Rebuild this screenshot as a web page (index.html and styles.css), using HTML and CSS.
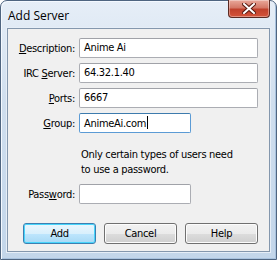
FILE: index.html
```html
<!DOCTYPE html>
<html lang="en">
<head>
  <meta charset="UTF-8" />
  <title>Add Server</title>
  <link rel="stylesheet" href="styles.css">
</head>
<body>

  <div class="window">
    <div class="titlebar">
      <span class="title">Add Server</span>
      <div class="close">
        <svg width="14" height="11" viewBox="0 0 14 11">
          <path d="M2 1 L12 10 M12 1 L2 10" stroke="#5a1a10" stroke-width="4" stroke-linecap="square"/>
          <path d="M2 1 L12 10 M12 1 L2 10" stroke="#ffffff" stroke-width="2" stroke-linecap="square"/>
        </svg>
      </div>
    </div>

    <div class="client">
      <div class="form">
        <label><u>D</u>escription:</label>
        <div class="field wide">Anime Ai</div>

        <label>IRC <u>S</u>erver:</label>
        <div class="field wide">64.32.1.40</div>

        <label><u>P</u>orts:</label>
        <div class="field wide">6667</div>

        <label><u>G</u>roup:</label>
        <div class="field short focus">AnimeAi.com<span class="caret"></span></div>
      </div>

      <p class="note">Only certain types of users need<br>to use a password.</p>

      <div class="form">
        <label>Pass<u>w</u>ord:</label>
        <div class="field short"></div>
      </div>

      <div class="buttons">
        <button class="default">Add</button>
        <button>Cancel</button>
        <button>Help</button>
      </div>
    </div>
  </div>

</body>
</html>
```

FILE: styles.css
```css
* {
  box-sizing: border-box;
  margin: 0;
  padding: 0;
}

body {
  background: #ffffff;
  font-family: Tahoma, "DejaVu Sans Condensed", "Liberation Sans", sans-serif;
  font-size: 11px;
  letter-spacing: -0.3px;
  color: #000;
}

.window {
  width: 277px;
  height: 260px;
  border: 1px solid #4f6580;
  border-radius: 7px 7px 0 0;
  background: linear-gradient(180deg, #e6eef7 0%, #cfdeee 40%, #c3d6ea 100%);
  box-shadow: inset 1px 1px 0 #f4f9ff, inset -1px -1px 0 #a9c3df;
  display: flex;
  flex-direction: column;
  padding: 0 6px 7px 6px;
}

.titlebar {
  height: 27px;
  display: flex;
  justify-content: space-between;
  align-items: flex-start;
}

.title {
  font-family: "Open Sans", "Liberation Sans", sans-serif;
  font-size: 12px;
  letter-spacing: 0;
  margin-top: 6px;
  margin-left: 1px;
  color: #000;
}

.close {
  width: 42px;
  height: 18px;
  margin-top: -1px;
  border: 1px solid #5b2a22;
  border-top: none;
  border-radius: 0 0 4px 4px;
  background: linear-gradient(180deg, #e9a99b 0%, #d47867 45%, #c0412c 55%, #d4543a 100%);
  box-shadow: inset 0 0 0 1px rgba(255,255,255,0.35);
  display: flex;
  align-items: center;
  justify-content: center;
}

.client {
  flex: 1;
  background: #f0f0f0;
  border: 1px solid #8497ad;
  box-shadow: 0 0 0 1px #e6eef7;
  padding-top: 9px;
}

.form {
  display: grid;
  grid-template-columns: 67px auto;
  column-gap: 4px;
  row-gap: 5px;
  align-items: center;
}

label {
  text-align: right;
  white-space: nowrap;
}

.field {
  height: 20px;
  background: #fff;
  border: 1px solid #abadb3;
  border-top-color: #a0a2a8;
  border-radius: 2px;
  padding: 2px 4px;
  line-height: 14px;
  white-space: nowrap;
}

.wide {
  width: 179px;
}

.short {
  width: 112px;
}

.focus {
  border-color: #5b9bd5;
  border-top-color: #3d7bad;
}

.caret {
  display: inline-block;
  width: 1px;
  height: 13px;
  background: #000;
  vertical-align: -2px;
  margin-left: 1px;
}

.note {
  margin: 14px 0 7px 73px;
  line-height: 15px;
}

.buttons {
  display: flex;
  gap: 8px;
  margin: 19px 0 0 15px;
}

button {
  width: 73px;
  height: 21px;
  font-family: inherit;
  font-size: 11px;
  letter-spacing: inherit;
  color: #000;
  border: 1px solid #707070;
  border-radius: 3px;
  background: linear-gradient(180deg, #f2f2f2 0%, #ebebeb 50%, #dddddd 51%, #cfcfcf 100%);
  box-shadow: inset 0 0 0 1px #fcfcfc;
}

button.default {
  border-color: #3c7fb1;
  background: linear-gradient(180deg, #eaf6fd 0%, #d9f0fc 50%, #bee6fd 51%, #a7d9f5 100%);
  box-shadow: inset 0 0 0 1px #48d5fb;
}
```
